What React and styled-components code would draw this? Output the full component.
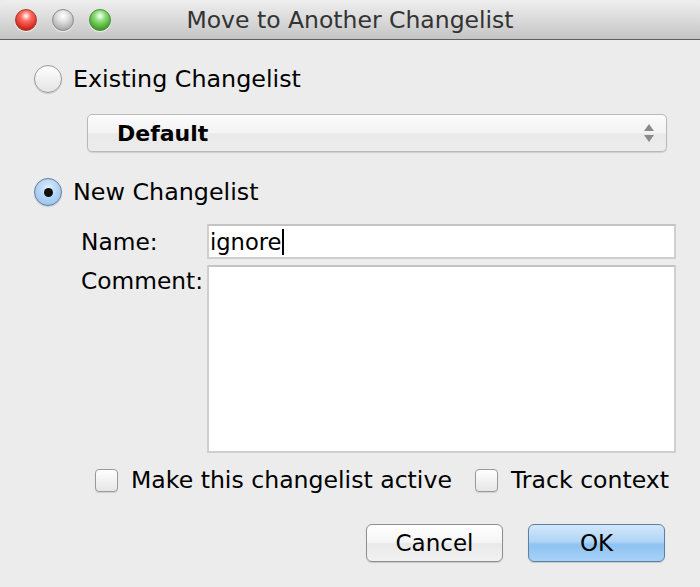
import React from 'react'
import styled, { createGlobalStyle } from 'styled-components'

const Global = createGlobalStyle`
  html, body { margin: 0; padding: 0; background: #ececec; }
  body { font-family: 'DejaVu Sans', 'Liberation Sans', sans-serif; }
`

const Window = styled.div`
  width: 700px;
  height: 587px;
  background: #ececec;
  display: flex;
  flex-direction: column;
  overflow: hidden;
  color: #000;
`

const TitleBar = styled.div`
  height: 39px;
  border-bottom: 1px solid #5e5e5e;
  border-radius: 8px 8px 0 0;
  background: linear-gradient(#efefef, #d6d6d6 60%, #c4c4c4);
  display: flex;
  align-items: center;
  position: relative;
  flex-shrink: 0;
`

const Lights = styled.div`
  display: flex;
  gap: 15px;
  padding-left: 15px;
`

const Light = styled.span`
  width: 22px;
  height: 22px;
  border-radius: 50%;
  box-sizing: border-box;
  border: 1px solid ${p => p.$edge};
  background: radial-gradient(circle at 50% 30%, #fff 0, ${p => p.$light} 30%, ${p => p.$dark} 80%);
  box-shadow: 0 1px 1px rgba(255,255,255,0.7);
`

const Title = styled.div`
  position: absolute;
  left: 0;
  right: 0;
  top: 0;
  bottom: 0;
  display: flex;
  align-items: center;
  justify-content: center;
  font-size: 23.5px;
  color: #333;
  pointer-events: none;
`

const Content = styled.div`
  flex: 1;
  display: flex;
  flex-direction: column;
  padding: 25px 24px 0 34px;
`

const RadioRow = styled.label`
  display: flex;
  align-items: center;
  gap: 11px;
  height: 28px;
  font-size: 23.8px;
  margin-top: ${p => p.$top || 0}px;
`

const Radio = styled.span`
  width: 28px;
  height: 28px;
  box-sizing: border-box;
  border-radius: 50%;
  border: 1px solid ${p => (p.$on ? '#5a7ea8' : '#9a9a9a')};
  background: ${p =>
    p.$on
      ? 'radial-gradient(circle at 50% 35%, #e4f1fd 0, #b4d4f3 45%, #8ebde9 100%)'
      : 'linear-gradient(#ffffff, #f1f1f1 50%, #e4e4e4)'};
  box-shadow: 0 1px 1px rgba(0,0,0,0.15);
  display: flex;
  align-items: center;
  justify-content: center;
  &::after {
    content: '';
    display: ${p => (p.$on ? 'block' : 'none')};
    width: 9px;
    height: 9px;
    border-radius: 50%;
    background: #111;
  }
`

const Combo = styled.div`
  margin: 21px 0 0 53px;
  width: 580px;
  height: 38px;
  box-sizing: border-box;
  border: 1px solid #b9b9b9;
  border-radius: 5px;
  background: linear-gradient(#fbfbfb, #f3f3f3 50%, #e9e9e9 52%, #ececec);
  box-shadow: 0 1px 1px rgba(0,0,0,0.12);
  display: flex;
  align-items: center;
  padding: 0 10px 0 29px;
  font-size: 22px;
  font-weight: bold;
`

const ComboText = styled.span`
  flex: 1;
`

const Form = styled.div`
  display: grid;
  grid-template-columns: 126px 469px;
  row-gap: 6px;
  margin: 18px 0 0 47px;
`

const Label = styled.div`
  font-size: 23.3px;
  padding-top: ${p => p.$pt}px;
`

const Field = styled.div`
  box-sizing: border-box;
  height: ${p => p.$h}px;
  background: #fff;
  border: 2px solid #cfcfcf;
  border-top-color: #c4c4c4;
  font-size: 22.6px;
  padding: 3px 1px;
  display: flex;
  align-items: ${p => (p.$multi ? 'flex-start' : 'center')};
`

const Caret = styled.span`
  display: inline-block;
  width: 2px;
  height: 26px;
  background: #000;
  margin-left: 1px;
`

const Checks = styled.div`
  display: flex;
  align-items: center;
  margin: 13px 0 0 61px;
  height: 28px;
`

const CheckLabel = styled.label`
  display: flex;
  align-items: center;
  gap: 13px;
  font-size: 23.6px;
  margin-right: ${p => p.$mr || 0}px;
`

const Box = styled.span`
  width: 23px;
  height: 23px;
  box-sizing: border-box;
  border: 1px solid #9a9a9a;
  border-radius: 4px;
  background: linear-gradient(#ffffff, #f2f2f2 50%, #e6e6e6);
  box-shadow: 0 1px 1px rgba(0,0,0,0.12);
`

const Buttons = styled.div`
  display: flex;
  justify-content: flex-end;
  gap: 25px;
  margin: 30px 11px 0 0;
`

const Button = styled.button`
  width: 137px;
  height: 38px;
  box-sizing: border-box;
  border-radius: 6px;
  font-family: inherit;
  font-size: 23px;
  color: #000;
  padding: 0;
  border: 1px solid ${p => (p.$primary ? '#5d7fa6' : '#8e8e8e')};
  background: ${p =>
    p.$primary
      ? 'linear-gradient(#d2e7fb, #b2d5f6 45%, #8ec2f1 55%, #a6d2f7)'
      : 'linear-gradient(#ffffff, #f5f5f5 48%, #e9e9e9 52%, #f2f2f2)'};
  box-shadow: 0 1px 1px rgba(0,0,0,0.15);
`

const Arrows = () => (
  <svg width="14" height="22" viewBox="0 0 14 22">
    <path d="M7 2 L12 9 L2 9 Z" fill="#8a8a8a" />
    <path d="M7 20 L12 13 L2 13 Z" fill="#8a8a8a" />
  </svg>
)

export default function App() {
  return (
    <Window>
      <Global />
      <TitleBar>
        <Lights>
          <Light $light="#ff6b5f" $dark="#c81e14" $edge="#a9392f" />
          <Light $light="#e4e4e4" $dark="#a8a8a8" $edge="#8d8d8d" />
          <Light $light="#8fe07a" $dark="#3a9a22" $edge="#4a8a36" />
        </Lights>
        <Title>Move to Another Changelist</Title>
      </TitleBar>
      <Content>
        <RadioRow $top={0}>
          <Radio />
          Existing Changelist
        </RadioRow>
        <Combo>
          <ComboText>Default</ComboText>
          <Arrows />
        </Combo>
        <RadioRow $top={26}>
          <Radio $on />
          New Changelist
        </RadioRow>
        <Form>
          <Label $pt={4}>Name:</Label>
          <Field $h={35}>
            ignore
            <Caret />
          </Field>
          <Label $pt={2}>Comment:</Label>
          <Field $h={188} $multi />
        </Form>
        <Checks>
          <CheckLabel $mr={23}>
            <Box />
            Make this changelist active
          </CheckLabel>
          <CheckLabel>
            <Box />
            Track context
          </CheckLabel>
        </Checks>
        <Buttons>
          <Button>Cancel</Button>
          <Button $primary>OK</Button>
        </Buttons>
      </Content>
    </Window>
  )
}
